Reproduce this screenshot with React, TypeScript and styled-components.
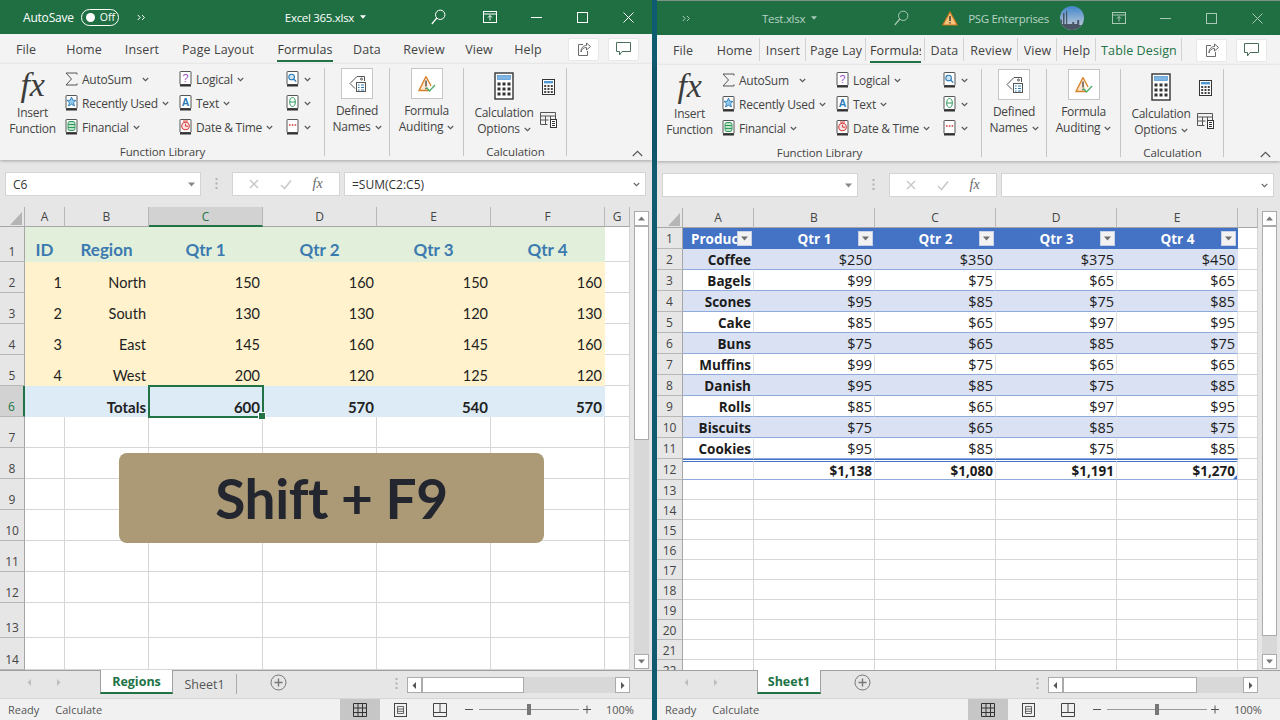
import React from "react";
import styled, { createGlobalStyle } from "styled-components";

const Global = createGlobalStyle`
  html, body { margin: 0; padding: 0; width: 1280px; height: 720px; overflow: hidden; background: #0f5c70; }
  * { box-sizing: border-box; }
`;

const UI = `"Open Sans", "Noto Sans", "Liberation Sans", sans-serif`;

const Desktop = styled.div`
  display: flex;
  width: 1280px;
  height: 720px;
  gap: 5px;
  background: #0f5c70;
  font-family: ${UI};
  color: #444;
`;
const Win = styled.div<{ $w: number; $inactive?: boolean }>`
  width: ${(p) => p.$w}px;
  height: 720px;
  display: flex;
  flex-direction: column;
  background: #e6e6e6;
  ${(p) => (p.$inactive ? "border-top: 1px solid #7d9486;" : "")}
`;

/* title bar */
const TitleBar = styled.div<{ $faded?: boolean }>`
  height: 34px;
  flex: none;
  background: #1f6f43;
  display: flex;
  align-items: center;
  color: ${(p) => (p.$faded ? "#b9d3c4" : "#fff")};
  font-size: 11.5px;
  letter-spacing: -0.3px;
`;
const TitleText = styled.span<{ $ml: number }>`
  margin-left: ${(p) => p.$ml}px;
  white-space: nowrap;
`;
const AutoSaveLabel = styled(TitleText)`
  font-size: 12px;
  letter-spacing: -0.2px;
`;
const TitleIcon = styled.span<{ $ml: number }>`
  margin-left: ${(p) => p.$ml}px;
  display: flex;
  align-items: center;
`;
const Toggle = styled.span`
  margin-left: 7px;
  width: 38px;
  height: 17px;
  border: 1px solid #fff;
  border-radius: 9px;
  display: flex;
  align-items: center;
  padding-left: 4px;
  font-size: 10.5px;
  letter-spacing: 0;
  gap: 5px;
`;
const Knob = styled.span`
  width: 9px;
  height: 9px;
  border-radius: 50%;
  background: #fff;
`;
const WinButtons = styled.div`
  margin-left: auto;
  display: flex;
`;
const WinButton = styled.span<{ $w?: number }>`
  width: ${(p) => p.$w ?? 46}px;
  height: 34px;
  display: flex;
  align-items: center;
  justify-content: center;
`;

/* tabs */
const TabRow = styled.div`
  height: 30px;
  flex: none;
  background: #f3f3f3;
  display: flex;
  align-items: center;
  font-size: 12.5px;
`;
const Tab = styled.div<{ $w: number; $sep?: boolean; $accent?: boolean }>`
  width: ${(p) => p.$w}px;
  height: 30px;
  flex: none;
  display: flex;
  justify-content: center;
  align-items: flex-start;
  padding: 7px 4px 0;
  position: relative;
  color: ${(p) => (p.$accent ? "#217346" : "#444")};
  ${(p) =>
    p.$sep
      ? `&::after { content: ""; position: absolute; right: 0; top: 3px; height: 23px; width: 1px; background: #d2d2d2; }`
      : ""}
`;
const TabLabel = styled.span<{ $on?: boolean }>`
  min-width: 0;
  overflow: hidden;
  white-space: nowrap;
  line-height: 18px;
  height: 21px;
  letter-spacing: 0.1px;
  padding-bottom: 1px;
  ${(p) => (p.$on ? "border-bottom: 2px solid #217346; color: #3a3a3a; font-weight: 500;" : "")}
`;
const TabActions = styled.div`
  margin-left: auto;
  display: flex;
  gap: 9px;
  padding-right: 13px;
`;
const ActionBtn = styled.span`
  width: 31px;
  height: 23px;
  background: #fff;
  border: 1px solid #e8e8e8;
  border-radius: 2px;
  display: flex;
  align-items: center;
  justify-content: center;
`;

/* ribbon */
const Ribbon = styled.div`
  height: 96px;
  flex: none;
  background: #f3f3f3;
  display: flex;
  font-size: 12px;
  letter-spacing: -0.25px;
  box-shadow: 0 1px 3px rgba(0, 0, 0, 0.28);
  position: relative;
  z-index: 2;
`;
const Group = styled.div<{ $w: number }>`
  width: ${(p) => p.$w}px;
  flex: none;
  height: 96px;
  padding-top: 4px;
  display: flex;
  flex-direction: column;
  position: relative;
  &::after {
    content: "";
    position: absolute;
    right: 0;
    top: 4px;
    bottom: 4px;
    width: 1px;
    background: #c6c6c6;
  }
`;
const GroupBody = styled.div`
  flex: 1;
  display: flex;
  min-height: 0;
`;
const GroupLabel = styled.div`
  height: 16px;
  line-height: 16px;
  text-align: center;
  font-size: 11.5px;
  letter-spacing: -0.1px;
  white-space: nowrap;
`;
const BigBtn = styled.div<{ $w: number; $top: number; $ml?: number }>`
  width: ${(p) => p.$w}px;
  margin-left: ${(p) => p.$ml ?? 0}px;
  flex: none;
  display: flex;
  flex-direction: column;
  align-items: center;
  padding-top: ${(p) => p.$top}px;
`;
const FxMark = styled.div`
  font-family: "Liberation Serif", serif;
  font-style: italic;
  font-size: 34px;
  line-height: 34px;
  height: 37px;
  color: #3c3c3c;
`;
const BigLine = styled.div`
  height: 16px;
  line-height: 16px;
  white-space: nowrap;
  display: flex;
  align-items: center;
  gap: 4px;
`;
const CalcLine = styled(BigLine)`
  &:first-of-type {
    margin-top: 5px;
  }
`;
const IconBox = styled.div`
  width: 32px;
  height: 31px;
  background: #fff;
  border: 1px solid #c6c6c6;
  display: flex;
  align-items: center;
  justify-content: center;
  margin-bottom: 4px;
`;
const Stack = styled.div<{ $w: number }>`
  width: ${(p) => p.$w}px;
  flex: none;
  margin-top: -1px;
  display: flex;
  flex-direction: column;
`;
const Item = styled.div`
  height: 24px;
  display: flex;
  align-items: center;
  white-space: nowrap;
`;
const ItemIcon = styled.span`
  width: 17px;
  flex: none;
  display: flex;
`;
const ChevWrap = styled.span<{ $ml?: number }>`
  margin-left: ${(p) => p.$ml ?? 4}px;
  display: flex;
`;
const SmallCol = styled.div`
  width: 20px;
  flex: none;
  display: flex;
  flex-direction: column;
  align-items: center;
  padding-top: 11px;
  gap: 17px;
`;
const Collapse = styled.div`
  margin-left: auto;
  margin-right: 9px;
  align-self: flex-end;
  height: 14px;
  display: flex;
  align-items: center;
`;

/* formula bar */
const FormulaBar = styled.div`
  height: 47px;
  flex: none;
  background: #e6e6e6;
  display: flex;
  align-items: flex-start;
  padding: 12px 6px 0 5px;
`;
const BarBox = styled.div<{ $w?: number }>`
  height: 24px;
  ${(p) => (p.$w ? `width: ${p.$w}px; flex: none;` : "flex: 1;")}
  background: #fff;
  border: 1px solid #d4d4d4;
  display: flex;
  align-items: center;
  font-size: 12px;
  color: #333;
`;
const BarText = styled.span`
  margin-left: 7px;
  white-space: nowrap;
`;
const BarCaret = styled.span`
  margin-left: auto;
  margin-right: 5px;
  display: flex;
`;
const GripSlot = styled.span<{ $w: number }>`
  width: ${(p) => p.$w}px;
  flex: none;
  height: 24px;
  display: flex;
  align-items: center;
  justify-content: center;
`;
const FxButtons = styled.div`
  width: 108px;
  flex: none;
  height: 24px;
  margin-right: 4px;
  background: #fff;
  border: 1px solid #d4d4d4;
  display: flex;
  align-items: center;
  justify-content: space-around;
  padding: 0 6px;
`;
const SmallFx = styled.span`
  font-family: "Liberation Serif", serif;
  font-style: italic;
  font-size: 14px;
  color: #666;
`;

/* sheet */
const SheetPane = styled.div`
  flex: 1;
  min-height: 0;
  display: flex;
  position: relative;
`;
const Grid = styled.div<{ $cols: string; $rows: string; $w: number }>`
  width: ${(p) => p.$w}px;
  flex: none;
  height: 100%;
  overflow: hidden;
  background: #fff;
  display: grid;
  grid-template-columns: ${(p) => p.$cols};
  grid-template-rows: ${(p) => p.$rows};
  align-content: start;
  position: relative;
`;
const Corner = styled.div`
  background: #e6e6e6;
  border-right: 1px solid #b0b0b0;
  border-bottom: 1px solid #a6a6a6;
  display: flex;
  align-items: flex-end;
  justify-content: flex-end;
  padding: 0 2px 1px 0;
`;
const ColHead = styled.div<{ $on?: boolean }>`
  background: ${(p) => (p.$on ? "#d2d2d2" : "#e6e6e6")};
  border-right: 1px solid #b8b8b8;
  border-bottom: ${(p) => (p.$on ? "2px solid #217346" : "1px solid #a6a6a6")};
  display: flex;
  align-items: center;
  justify-content: center;
  font-size: 12px;
  color: ${(p) => (p.$on ? "#217346" : "#444")};
`;
const RowHead = styled.div<{ $on?: boolean }>`
  background: ${(p) => (p.$on ? "#d2d2d2" : "#e6e6e6")};
  border-right: ${(p) => (p.$on ? "2px solid #217346" : "1px solid #a6a6a6")};
  border-bottom: 1px solid #b8b8b8;
  display: flex;
  align-items: flex-end;
  justify-content: center;
  line-height: 18px;
  font-size: 12px;
  color: ${(p) => (p.$on ? "#217346" : "#444")};
`;
const RowHeadMid = styled(RowHead)`
  align-items: center;
  padding-top: 2px;
`;
const BlankCell = styled.div`
  border-right: 1px solid #d6d6d6;
  border-bottom: 1px solid #d6d6d6;
`;
const RegionCell = styled.div<{ $fill: string; $align?: string; $bold?: boolean; $head?: boolean; $sel?: boolean }>`
  background: ${(p) => p.$fill};
  display: flex;
  align-items: flex-end;
  justify-content: ${(p) => p.$align ?? "flex-end"};
  padding: 0 3px ${(p) => (p.$head ? 2 : 0)}px 2px;
  line-height: 20px;
  font-family: Lato, "Liberation Sans", sans-serif;
  font-size: ${(p) => (p.$head ? 17 : p.$bold ? 15 : 14.5)}px;
  font-weight: ${(p) => (p.$bold || p.$head ? 700 : 400)};
  color: ${(p) => (p.$head ? "#3b7ab0" : "#222")};
  white-space: nowrap;
  position: relative;
  ${(p) =>
    p.$sel
      ? `outline: 2px solid #217346; outline-offset: -1px; z-index: 1;
         &::after { content: ""; position: absolute; right: -3px; bottom: -3px; width: 6px; height: 6px; background: #217346; border: 1px solid #fff; }`
      : ""}
`;
const TableHead = styled.div<{ $left?: boolean }>`
  background: #4472c4;
  color: #fff;
  font-size: 13.5px;
  font-weight: 700;
  display: flex;
  align-items: center;
  justify-content: ${(p) => (p.$left ? "flex-start" : "center")};
  padding-left: ${(p) => (p.$left ? 8 : 0)}px;
  position: relative;
  overflow: hidden;
  white-space: nowrap;
`;
const FilterBtn = styled.span`
  position: absolute;
  right: 2px;
  top: 3px;
  width: 15px;
  height: 15px;
  background: #f2f2f2;
  border: 1px solid #c8d2e6;
  display: flex;
  align-items: center;
  justify-content: center;
`;
const TableCell = styled.div<{ $band?: boolean; $bold?: boolean; $total?: boolean; $handle?: boolean }>`
  background: ${(p) => (p.$band ? "#d9e1f2" : "#fff")};
  border-bottom: 1px solid #8ea9db;
  border-right: 1px solid ${(p) => (p.$band ? "#d9e1f2" : "#e2e2e2")};
  ${(p) => (p.$total ? "border-top: 3px double #4472c4;" : "padding-top: 1px;")}
  display: flex;
  align-items: center;
  justify-content: flex-end;
  padding-right: 2px;
  font-size: ${(p) => (p.$bold ? 13.5 : 14.5)}px;
  font-weight: ${(p) => (p.$bold ? 700 : 400)};
  color: #1c1c1c;
  white-space: nowrap;
  position: relative;
  ${(p) =>
    p.$handle
      ? `&::after { content: ""; position: absolute; right: 0; bottom: 0; border-left: 4px solid transparent; border-bottom: 4px solid #4472c4; }`
      : ""}
`;
const Banner = styled.div`
  position: absolute;
  left: 119px;
  top: 246px;
  width: 425px;
  height: 90px;
  background: #ab9a75;
  border-radius: 8px;
  display: flex;
  align-items: center;
  justify-content: center;
  font-family: Lato, "Liberation Sans", sans-serif;
  font-weight: 700;
  font-size: 55px;
  color: #23262e;
  z-index: 3;
  letter-spacing: -0.4px;
`;

/* scrollbars */
const VScroll = styled.div<{ $top: number }>`
  flex: 1;
  display: flex;
  flex-direction: column;
  align-items: center;
  padding-top: ${(p) => p.$top}px;
  padding-bottom: 1px;
  background: #e6e6e6;
`;
const ScrollBtn = styled.span`
  width: 15px;
  height: 15px;
  flex: none;
  background: #fff;
  border: 1px solid #ababab;
  display: flex;
  align-items: center;
  justify-content: center;
`;
const VThumb = styled.div<{ $h: number }>`
  width: 15px;
  height: ${(p) => p.$h}px;
  flex: none;
  background: #fff;
  border: 1px solid #ababab;
`;
const VTrack = styled.div`
  width: 15px;
  flex: 1;
  background: #d8d8d8;
`;

/* sheet tabs */
const TabsBar = styled.div`
  height: 28px;
  flex: none;
  background: #e6e6e6;
  border-top: 1px solid #a0a0a0;
  display: flex;
  align-items: flex-start;
  font-size: 12.5px;
  position: relative;
`;
const SheetNav = styled.div`
  width: 100px;
  flex: none;
  height: 23px;
  display: flex;
  align-items: center;
  padding-left: 26px;
  gap: 22px;
`;
const SheetTab = styled.div<{ $w: number; $on?: boolean }>`
  width: ${(p) => p.$w}px;
  height: 24px;
  flex: none;
  margin-top: -1px;
  display: flex;
  align-items: center;
  justify-content: center;
  ${(p) =>
    p.$on
      ? "background: #fff; color: #217346; font-weight: 700; border-bottom: 2px solid #217346; border-left: 1px solid #a0a0a0; border-right: 1px solid #a0a0a0;"
      : "color: #555; border-right: 1px solid #ababab; height: 20px; margin-top: 3px;"}
`;
const AddSheet = styled.span`
  margin-left: 33px;
  margin-top: 3px;
  display: flex;
`;
const HGrip = styled.span`
  margin-top: 6px;
  margin-right: 9px;
  margin-left: auto;
  display: flex;
`;
const HScroll = styled.div<{ $w: number }>`
  margin-right: 22px;
  margin-top: 6px;
  width: ${(p) => p.$w}px;
  height: 16px;
  flex: none;
  display: flex;
  background: #d8d8d8;
`;
const HBtn = styled.span`
  width: 15px;
  flex: none;
  height: 16px;
  background: #fff;
  border: 1px solid #ababab;
  display: flex;
  align-items: center;
  justify-content: center;
`;
const HThumb = styled.span<{ $w: number }>`
  width: ${(p) => p.$w}px;
  flex: none;
  height: 16px;
  background: #fff;
  border: 1px solid #ababab;
  margin-right: auto;
`;

/* status */
const Status = styled.div`
  height: 22px;
  flex: none;
  background: #f1f1f1;
  border-top: 1px solid #d6d6d6;
  display: flex;
  align-items: center;
  font-size: 11px;
  color: #555;
  padding-left: 8px;
`;
const StatusText = styled.span<{ $ml?: number }>`
  margin-left: ${(p) => p.$ml ?? 0}px;
  white-space: nowrap;
`;
const StatusRight = styled.div`
  margin-left: auto;
  display: flex;
  align-items: center;
  padding-right: 19px;
  height: 100%;
`;
const ViewBtn = styled.span<{ $on?: boolean }>`
  width: 40px;
  height: 100%;
  display: flex;
  align-items: center;
  justify-content: center;
  background: ${(p) => (p.$on ? "#c6c6c6" : "transparent")};
`;
const Zoomer = styled.span`
  width: 8px;
  height: 1px;
  background: #555;
  margin-left: 5px;
`;
const ZoomPlus = styled.span`
  margin-left: 4px;
  display: flex;
`;
const Track = styled.div`
  width: 100px;
  height: 1px;
  margin-left: 6px;
  background: #9a9a9a;
  position: relative;
  &::after {
    content: "";
    position: absolute;
    left: 48px;
    top: -5px;
    width: 4px;
    height: 11px;
    background: #777;
  }
`;
const Pct = styled.span`
  margin-left: 15px;
  width: 27px;
  white-space: nowrap;
`;

/* icons */
const Chev = ({ c = "#555" }: { c?: string }) => (
  <svg width="7" height="5" viewBox="0 0 7 5">
    <path d="M.8 1l2.7 2.7L6.2 1" fill="none" stroke={c} strokeWidth="1.1" />
  </svg>
);
const Tri = ({ dir = "down", c = "#777", s = 7 }: { dir?: string; c?: string; s?: number }) => {
  const pts: Record<string, string> = {
    down: "0,1.5 7,1.5 3.5,5.5",
    up: "0,5.5 7,5.5 3.5,1.5",
    left: "5,0 5,7 1.5,3.5",
    right: "2,0 2,7 5.5,3.5",
  };
  return (
    <svg width={s} height={s} viewBox="0 0 7 7">
      <polygon points={pts[dir]} fill={c} />
    </svg>
  );
};
const Book = ({ children }: { children?: React.ReactNode }) => (
  <svg width="13" height="17" viewBox="0 0 13 17">
    <rect x="1" y="0.5" width="11" height="13" rx="0.5" fill="#fff" stroke="#555" />
    <path d="M1 14.5h11" stroke="#333" strokeWidth="2" />
    {children}
  </svg>
);
const Sigma = () => (
  <svg width="13" height="14" viewBox="0 0 13 14">
    <path d="M12 2.5V1H1l5.5 6L1 13h11v-1.5" fill="none" stroke="#555" strokeWidth="1" />
  </svg>
);
const IconStar = () => (
  <Book>
    <polygon points="6.5,2 7.8,5.2 11,5.4 8.6,7.6 9.4,11 6.5,9.2 3.6,11 4.4,7.6 2,5.4 5.2,5.2" fill="#8fc7ea" stroke="#2a7ab8" strokeWidth="0.9" />
  </Book>
);
const IconDb = () => (
  <Book>
    <rect x="3" y="2.5" width="7" height="9" rx="2" fill="#bfe3cb" stroke="#2f9a5c" />
    <path d="M3 5.5h7M3 8.5h7" stroke="#2f9a5c" />
  </Book>
);
const IconLogical = () => (
  <Book>
    <text x="6.5" y="11" fontSize="11" textAnchor="middle" fill="#9b4fc4" fontFamily="Liberation Sans, sans-serif">?</text>
  </Book>
);
const IconText = () => (
  <Book>
    <text x="6.5" y="11" fontSize="10.5" fontWeight="700" textAnchor="middle" fill="#2a7ab8" fontFamily="Liberation Sans, sans-serif">A</text>
  </Book>
);
const IconClock = () => (
  <Book>
    <circle cx="6.5" cy="7" r="3.8" fill="#fbe3e3" stroke="#d83b3b" strokeWidth="1.1" />
    <path d="M6.5 4.8V7.2H9" fill="none" stroke="#d83b3b" />
    <path d="M4 2h5" stroke="#d83b3b" />
  </Book>
);
const IconLookup = () => (
  <Book>
    <circle cx="5.6" cy="6" r="2.8" fill="#cfe6f6" stroke="#2a7ab8" strokeWidth="1.1" />
    <path d="M7.6 8l2.6 2.6" stroke="#2a7ab8" strokeWidth="1.3" />
  </Book>
);
const IconTheta = () => (
  <Book>
    <ellipse cx="6.5" cy="7" rx="2.8" ry="4.4" fill="none" stroke="#2f9a5c" strokeWidth="1" />
    <path d="M3.7 7h5.6" stroke="#2f9a5c" />
  </Book>
);
const IconMore = () => (
  <Book>
    <path d="M3 6h1.6M5.8 6h1.6M8.6 6h1.6" stroke="#d83b3b" strokeWidth="1.6" />
  </Book>
);
const IconTag = () => (
  <svg width="17" height="17" viewBox="0 0 17 17">
    <path d="M15.5 6V1.5H8L1 8.5 6 13.5" fill="none" stroke="#555" />
    <circle cx="12.5" cy="4" r="1" fill="none" stroke="#555" />
    <rect x="7.5" y="7.5" width="9" height="9" fill="#fff" stroke="#555" />
    <path d="M9 10h1.6M12 10h3M9 12.5h1.6M12 12.5h3M9 15h1.6M12 15h3" stroke="#2a7ab8" />
  </svg>
);
const IconAudit = () => (
  <svg width="18" height="18" viewBox="0 0 18 18">
    <path d="M8 1.5L1 15.5h10" fill="#fbe6cf" stroke="#d9822b" strokeWidth="1.4" />
    <path d="M8 1.5L13 11" fill="none" stroke="#d9822b" strokeWidth="1.4" />
    <path d="M8 5.5v6" stroke="#444" strokeWidth="1.3" />
    <path d="M8 12.8v1.4" stroke="#444" strokeWidth="1.3" />
    <path d="M8.5 12.5l3 3.5 5.5-6" fill="none" stroke="#4fae6a" strokeWidth="1.3" />
  </svg>
);
const IconCalcBig = () => (
  <svg width="20" height="28" viewBox="0 0 20 28">
    <rect x="1" y="1" width="18" height="26" fill="#fff" stroke="#333" strokeWidth="1.4" />
    <rect x="3.5" y="3.5" width="13" height="4" fill="#7cb4e2" stroke="#3f87c6" strokeWidth="0.6" />
    {[10.5, 15.5, 20.5].flatMap((y) =>
      [3.5, 8.5, 13.5].map((x) => <rect key={`${x}-${y}`} x={x} y={y} width="3" height="3" fill="#333" />)
    )}
  </svg>
);
const IconCalcSmall = () => (
  <svg width="13" height="16" viewBox="0 0 13 16">
    <rect x="0.5" y="0.5" width="12" height="15" fill="#fff" stroke="#333" />
    <rect x="2" y="2" width="9" height="2.4" fill="#4d97d3" />
    {[6, 9, 12].flatMap((y) =>
      [2.2, 5.5, 8.8].map((x) => <rect key={`${x}-${y}`} x={x} y={y} width="2" height="2" fill="#444" />)
    )}
  </svg>
);
const IconCalcSheet = () => (
  <svg width="17" height="16" viewBox="0 0 17 16">
    <path d="M.5 12.5V.5h15v7M.5 4h15M.5 8h8M5.5 4v8.5M10.5 4v3M.5 12.5h7" fill="none" stroke="#555" />
    <rect x="10.5" y="7.5" width="6" height="8" fill="#fff" stroke="#333" />
    <path d="M12 9.5h3M12 11.5h3M12 13.5h3" stroke="#333" />
  </svg>
);
const IconShare = () => (
  <svg width="14" height="15" viewBox="0 0 14 15">
    <path d="M6 2.5H1.5v11h9V9" fill="none" stroke="#6b6b6b" />
    <path d="M4 10c.5-3 2.5-4.5 5.5-4.5V8L13.500 4.500 9.500 1v2.500C6 3.500 4 6 4 10z" fill="#fff" stroke="#6b6b6b" />
  </svg>
);
const IconComment = () => (
  <svg width="15" height="14" viewBox="0 0 15 14">
    <path d="M.5.5h14v9H6L3.500 13V9.500h-3z" fill="#fff" stroke="#4c6f5a" />
  </svg>
);
const IconSearch = ({ c }: { c: string }) => (
  <svg width="15" height="16" viewBox="0 0 15 16">
    <circle cx="9.2" cy="5.8" r="4.7" fill="none" stroke={c} />
    <path d="M5.8 9L.8 15" stroke={c} strokeWidth="1.2" />
  </svg>
);
const IconDisplay = ({ c }: { c: string }) => (
  <svg width="14" height="12" viewBox="0 0 14 12">
    <rect x="0.5" y="0.5" width="13" height="11" fill="none" stroke={c} />
    <path d="M.5 3h13" stroke={c} />
    <path d="M7 9.500V4.500M5 6.500l2-2 2 2" fill="none" stroke={c} />
  </svg>
);
const IconMin = ({ c }: { c: string }) => (
  <svg width="11" height="11" viewBox="0 0 11 11">
    <path d="M0 5.500h11" stroke={c} />
  </svg>
);
const IconMax = ({ c }: { c: string }) => (
  <svg width="11" height="11" viewBox="0 0 11 11">
    <rect x="0.5" y="0.5" width="10" height="10" fill="none" stroke={c} />
  </svg>
);
const IconClose = ({ c }: { c: string }) => (
  <svg width="11" height="11" viewBox="0 0 11 11">
    <path d="M.5.5l10 10M10.500.5l-10 10" stroke={c} />
  </svg>
);
const IconMore2 = ({ c }: { c: string }) => (
  <svg width="9" height="7" viewBox="0 0 9 7">
    <path d="M.8 1l2.400 2.500L.8 6M5 1l2.400 2.500L5 6" fill="none" stroke={c} />
  </svg>
);
const Grip = () => (
  <svg width="3" height="14" viewBox="0 0 3 14">
    {[0, 1, 2].map((i) => (
      <rect key={i} x="0.5" y={1 + i * 4.5} width="2" height="2" fill="#b0b0b0" />
    ))}
  </svg>
);
const Warn = () => (
  <svg width="16" height="15" viewBox="0 0 16 15">
    <path d="M8 1L.8 14h14.400z" fill="#f6c57a" stroke="#c9791f" strokeWidth="1.2" />
    <path d="M8 5v5M8 11.200v1.400" stroke="#333" strokeWidth="1.400" />
  </svg>
);
const Avatar = () => (
  <svg width="24" height="24" viewBox="0 0 24 24">
    <defs>
      <linearGradient id="sky" x1="0" y1="0" x2="0" y2="1">
        <stop offset="0" stopColor="#3f86cc" />
        <stop offset="1" stopColor="#d3d5da" />
      </linearGradient>
      <clipPath id="av">
        <circle cx="12" cy="12" r="12" />
      </clipPath>
    </defs>
    <g clipPath="url(#av)">
      <rect width="24" height="24" fill="url(#sky)" />
      <path d="M0 24V13l2 1v4h1V7h1.500v11H6V4l1.200 2v12h5v-2h2v2h3v-4h2v5h5v6z" fill="#4a5566" />
    </g>
  </svg>
);
const Check = () => (
  <svg width="12" height="11" viewBox="0 0 12 11">
    <path d="M1 6l3.500 3.500L11 1.500" fill="none" stroke="#c9c9c9" strokeWidth="1.600" />
  </svg>
);
const Cross = () => (
  <svg width="10" height="10" viewBox="0 0 10 10">
    <path d="M1 1l8 8M9 1l-8 8" stroke="#c9c9c9" strokeWidth="1.500" />
  </svg>
);
const PlusCircle = () => (
  <svg width="17" height="17" viewBox="0 0 17 17">
    <circle cx="8.500" cy="8.500" r="7.500" fill="none" stroke="#777" />
    <path d="M8.500 4.500v8M4.500 8.500h8" stroke="#777" strokeWidth="1.400" />
  </svg>
);
const GridView = () => (
  <svg width="14" height="14" viewBox="0 0 14 14">
    <path d="M.5.5h13v13H.5zM.5 5h13M.5 9.500h13M5 .5v13M9.500 .5v13" fill="none" stroke="#333" />
  </svg>
);
const PageView = () => (
  <svg width="13" height="14" viewBox="0 0 13 14">
    <rect x="0.5" y="0.500" width="12" height="13" fill="none" stroke="#444" />
    <path d="M3.500 3.500h6v7h-6zM3.500 6h6M3.500 8.300h6" fill="none" stroke="#444" strokeWidth="0.800" />
  </svg>
);
const BreakView = () => (
  <svg width="14" height="14" viewBox="0 0 14 14">
    <path d="M.5.5h13v13H.5zM.5 9.500h13M7 .5v9" fill="none" stroke="#444" />
  </svg>
);
const PlusSmall = () => (
  <svg width="8" height="9" viewBox="0 0 8 9">
    <path d="M4 .5v8M0 4.500h8" stroke="#555" />
  </svg>
);

/* shared pieces */
const RibbonBody = () => (
  <Ribbon>
    <Group $w={325}>
      <GroupBody>
        <BigBtn $w={65} $top={0}>
          <FxMark>fx</FxMark>
          <BigLine>Insert</BigLine>
          <BigLine>Function</BigLine>
        </BigBtn>
        <Stack $w={114}>
          <Item><ItemIcon><Sigma /></ItemIcon>AutoSum<ChevWrap $ml={10}><Chev /></ChevWrap></Item>
          <Item><ItemIcon><IconStar /></ItemIcon>Recently Used<ChevWrap><Chev /></ChevWrap></Item>
          <Item><ItemIcon><IconDb /></ItemIcon>Financial<ChevWrap><Chev /></ChevWrap></Item>
        </Stack>
        <Stack $w={107}>
          <Item><ItemIcon><IconLogical /></ItemIcon>Logical<ChevWrap><Chev /></ChevWrap></Item>
          <Item><ItemIcon><IconText /></ItemIcon>Text<ChevWrap><Chev /></ChevWrap></Item>
          <Item><ItemIcon><IconClock /></ItemIcon>Date &amp; Time<ChevWrap><Chev /></ChevWrap></Item>
        </Stack>
        <Stack $w={38}>
          <Item><IconLookup /><ChevWrap $ml={5}><Chev /></ChevWrap></Item>
          <Item><IconTheta /><ChevWrap $ml={5}><Chev /></ChevWrap></Item>
          <Item><IconMore /><ChevWrap $ml={5}><Chev /></ChevWrap></Item>
        </Stack>
      </GroupBody>
      <GroupLabel>Function Library</GroupLabel>
    </Group>
    <Group $w={65}>
      <GroupBody>
        <BigBtn $w={64} $top={0}>
          <IconBox><IconTag /></IconBox>
          <BigLine>Defined</BigLine>
          <BigLine>Names<Chev /></BigLine>
        </BigBtn>
      </GroupBody>
      <GroupLabel />
    </Group>
    <Group $w={74}>
      <GroupBody>
        <BigBtn $w={73} $top={0}>
          <IconBox><IconAudit /></IconBox>
          <BigLine>Formula</BigLine>
          <BigLine>Auditing<Chev /></BigLine>
        </BigBtn>
      </GroupBody>
      <GroupLabel />
    </Group>
    <Group $w={103}>
      <GroupBody>
        <BigBtn $w={68} $top={4} $ml={6}>
          <IconCalcBig />
          <CalcLine>Calculation</CalcLine>
          <BigLine>Options<Chev /></BigLine>
        </BigBtn>
        <SmallCol>
          <IconCalcSmall />
          <IconCalcSheet />
        </SmallCol>
      </GroupBody>
      <GroupLabel>Calculation</GroupLabel>
    </Group>
    <Collapse>
      <svg width="11" height="7" viewBox="0 0 11 7"><path d="M.8 6l4.700-4.700L10.200 6" fill="none" stroke="#555" strokeWidth="1.100" /></svg>
    </Collapse>
  </Ribbon>
);

const Formula = ({ name, formula }: { name: string; formula: string }) => (
  <FormulaBar>
    <BarBox $w={196}>
      <BarText>{name}</BarText>
      <BarCaret><Tri c="#888" /></BarCaret>
    </BarBox>
    <GripSlot $w={31}><Grip /></GripSlot>
    <FxButtons>
      <Cross />
      <Check />
      <SmallFx>fx</SmallFx>
    </FxButtons>
    <BarBox>
      <BarText>{formula}</BarText>
      <BarCaret><Chev c="#666" /></BarCaret>
    </BarBox>
  </FormulaBar>
);

const Scrollbar = ({ top, thumb }: { top: number; thumb: number }) => (
  <VScroll $top={top}>
    <ScrollBtn><Tri dir="up" /></ScrollBtn>
    <VThumb $h={thumb} />
    <VTrack />
    <ScrollBtn><Tri dir="down" /></ScrollBtn>
  </VScroll>
);

const TabsFooter = ({ w, thumb, children }: { w: number; thumb: number; children: React.ReactNode }) => (
  <TabsBar>
    <SheetNav>
      <Tri dir="left" c="#bdbdbd" />
      <Tri dir="right" c="#bdbdbd" />
    </SheetNav>
    {children}
    <AddSheet><PlusCircle /></AddSheet>
    <HGrip><Grip /></HGrip>
    <HScroll $w={w}>
      <HBtn><Tri dir="left" c="#555" /></HBtn>
      <HThumb $w={thumb} />
      <HBtn><Tri dir="right" c="#555" /></HBtn>
    </HScroll>
  </TabsBar>
);

const Footer = () => (
  <Status>
    <StatusText>Ready</StatusText>
    <StatusText $ml={16}>Calculate</StatusText>
    <StatusRight>
      <ViewBtn $on><GridView /></ViewBtn>
      <ViewBtn><PageView /></ViewBtn>
      <ViewBtn><BreakView /></ViewBtn>
      <Zoomer />
      <Track />
      <ZoomPlus><PlusSmall /></ZoomPlus>
      <Pct>100%</Pct>
    </StatusRight>
  </Status>
);

/* data */
const leftTabs: [string, number][] = [
  ["File", 52], ["Home", 64], ["Insert", 52], ["Page Layout", 100], ["Formulas", 74],
  ["Data", 50], ["Review", 64], ["View", 46], ["Help", 52],
];
const rightTabs: [string, number][] = [
  ["File", 52], ["Home", 51], ["Insert", 46], ["Page Layout", 60], ["Formulas", 59],
  ["Data", 39], ["Review", 54], ["View", 39], ["Help", 39], ["Table Design", 86],
];
const regionRows: (string | number)[][] = [
  [1, "North", 150, 160, 150, 160],
  [2, "South", 130, 130, 120, 130],
  [3, "East", 145, 160, 145, 160],
  [4, "West", 200, 120, 125, 120],
];
const regionHead = ["ID", "Region", "Qtr 1", "Qtr 2", "Qtr 3", "Qtr 4"];
const regionTotals = ["", "Totals", 600, 570, 540, 570];
const leftLetters = ["A", "B", "C", "D", "E", "F", "G"];

const tableRows: [string, string, string, string, string][] = [
  ["Coffee", "$250", "$350", "$375", "$450"],
  ["Bagels", "$99", "$75", "$65", "$65"],
  ["Scones", "$95", "$85", "$75", "$85"],
  ["Cake", "$85", "$65", "$97", "$95"],
  ["Buns", "$75", "$65", "$85", "$75"],
  ["Muffins", "$99", "$75", "$65", "$65"],
  ["Danish", "$95", "$85", "$75", "$85"],
  ["Rolls", "$85", "$65", "$97", "$95"],
  ["Biscuits", "$75", "$65", "$85", "$75"],
  ["Cookies", "$95", "$85", "$75", "$85"],
];
const tableHead = ["Product", "Qtr 1", "Qtr 2", "Qtr 3", "Qtr 4"];
const tableTotals = ["", "$1,138", "$1,080", "$1,191", "$1,270"];
const rightLetters = ["A", "B", "C", "D", "E", ""];

const CornerMark = () => (
  <Corner>
    <svg width="12" height="13" viewBox="0 0 12 13"><polygon points="12,0 12,13 0,13" fill="#b5b5b5" /></svg>
  </Corner>
);

const LeftSheet = () => (
  <SheetPane>
    <Grid
      $w={630}
      $cols="25px 40px 84px 114px 114px 114px 114px 25px"
      $rows="20px 35px repeat(11, 31px) 35px 32px"
    >
      <CornerMark />
      {leftLetters.map((l) => (
        <ColHead key={l} $on={l === "C"}>{l}</ColHead>
      ))}
      <RowHead>1</RowHead>
      {regionHead.map((h) => (
        <RegionCell key={h} $fill="#e2efda" $head $align="center">{h}</RegionCell>
      ))}
      <BlankCell />
      {regionRows.map((r, i) => (
        <React.Fragment key={i}>
          <RowHead>{i + 2}</RowHead>
          {r.map((v, j) => (
            <RegionCell key={j} $fill="#fff2cc">{v}</RegionCell>
          ))}
          <BlankCell />
        </React.Fragment>
      ))}
      <RowHead $on>6</RowHead>
      {regionTotals.map((v, j) => (
        <RegionCell key={j} $fill="#ddebf7" $bold $sel={j === 2}>{v}</RegionCell>
      ))}
      <BlankCell />
      {[7, 8, 9, 10, 11, 12, 13, 14].map((n) => (
        <React.Fragment key={n}>
          <RowHead>{n}</RowHead>
          {leftLetters.map((l) => <BlankCell key={l} />)}
        </React.Fragment>
      ))}
      <Banner>Shift + F9</Banner>
    </Grid>
    <Scrollbar top={4} thumb={214} />
  </SheetPane>
);

const RightSheet = () => (
  <SheetPane>
    <Grid
      $w={601}
      $cols="26px 71px 121px 121px 121px 121px 20px"
      $rows="20px repeat(12, 21px) repeat(10, 20px)"
    >
      <CornerMark />
      {rightLetters.map((l, i) => (
        <ColHead key={i}>{l}</ColHead>
      ))}
      <RowHeadMid>1</RowHeadMid>
      {tableHead.map((h, i) => (
        <TableHead key={h} $left={i === 0}>{h}<FilterBtn><Tri c="#6f6f6f" /></FilterBtn></TableHead>
      ))}
      <BlankCell />
      {tableRows.map((r, i) => (
        <React.Fragment key={r[0]}>
          <RowHeadMid>{i + 2}</RowHeadMid>
          {r.map((v, j) => (
            <TableCell key={j} $band={i % 2 === 0} $bold={j === 0}>{v}</TableCell>
          ))}
          <BlankCell />
        </React.Fragment>
      ))}
      <RowHeadMid>12</RowHeadMid>
      {tableTotals.map((v, j) => (
        <TableCell key={j} $bold $total $handle={j === 4}>{v}</TableCell>
      ))}
      <BlankCell />
      {Array.from({ length: 10 }).map((_, i) => (
        <React.Fragment key={i}>
          <RowHeadMid>{i + 13}</RowHeadMid>
          {rightLetters.map((_l, j) => <BlankCell key={j} />)}
        </React.Fragment>
      ))}
    </Grid>
    <Scrollbar top={3} thumb={410} />
  </SheetPane>
);

export default function App() {
  const on = "#fff";
  const off = "#a9c9b6";
  return (
    <Desktop>
      <Global />
      <Win $w={652}>
        <TitleBar>
          <AutoSaveLabel $ml={23}>AutoSave</AutoSaveLabel>
          <Toggle><Knob />Off</Toggle>
          <TitleIcon $ml={18}><IconMore2 c="#fff" /></TitleIcon>
          <TitleText $ml={139}>Excel 365.xlsx</TitleText>
          <TitleIcon $ml={6}><Tri c="#fff" s={6} /></TitleIcon>
          <WinButtons>
            <WinButton><IconSearch c={on} /></WinButton>
            <WinButton $w={5} />
            <WinButton $w={47}><IconDisplay c={on} /></WinButton>
            <WinButton><IconMin c={on} /></WinButton>
            <WinButton><IconMax c={on} /></WinButton>
            <WinButton $w={47}><IconClose c={on} /></WinButton>
          </WinButtons>
        </TitleBar>
        <TabRow>
          {leftTabs.map(([t, w]) => (
            <Tab key={t} $w={w}><TabLabel $on={t === "Formulas"}>{t}</TabLabel></Tab>
          ))}
          <TabActions>
            <ActionBtn><IconShare /></ActionBtn>
            <ActionBtn><IconComment /></ActionBtn>
          </TabActions>
        </TabRow>
        <RibbonBody />
        <Formula name="C6" formula="=SUM(C2:C5)" />
        <LeftSheet />
        <TabsFooter w={223} thumb={102}>
          <SheetTab $w={73} $on>Regions</SheetTab>
          <SheetTab $w={64}>Sheet1</SheetTab>
        </TabsFooter>
        <Footer />
      </Win>
      <Win $w={623} $inactive>
        <TitleBar $faded>
          <TitleIcon $ml={25}><IconMore2 c={off} /></TitleIcon>
          <TitleText $ml={71}>Test.xlsx</TitleText>
          <TitleIcon $ml={6}><Tri c={off} s={6} /></TitleIcon>
          <TitleIcon $ml={77}><IconSearch c={off} /></TitleIcon>
          <TitleIcon $ml={33}><Warn /></TitleIcon>
          <TitleText $ml={10}>PSG Enterprises</TitleText>
          <TitleIcon $ml={11}><Avatar /></TitleIcon>
          <WinButtons>
            <WinButton $w={47}><IconDisplay c={off} /></WinButton>
            <WinButton><IconMin c={off} /></WinButton>
            <WinButton><IconMax c={off} /></WinButton>
            <WinButton><IconClose c={off} /></WinButton>
          </WinButtons>
        </TitleBar>
        <TabRow>
          {rightTabs.map(([t, w]) => (
            <Tab key={t} $w={w} $sep={t !== "File"} $accent={t === "Table Design"}>
              <TabLabel $on={t === "Formulas"}>{t}</TabLabel>
            </Tab>
          ))}
          <TabActions>
            <ActionBtn><IconShare /></ActionBtn>
            <ActionBtn><IconComment /></ActionBtn>
          </TabActions>
        </TabRow>
        <RibbonBody />
        <Formula name="" formula="" />
        <RightSheet />
        <TabsFooter w={210} thumb={134}>
          <SheetTab $w={64} $on>Sheet1</SheetTab>
        </TabsFooter>
        <Footer />
      </Win>
    </Desktop>
  );
}
